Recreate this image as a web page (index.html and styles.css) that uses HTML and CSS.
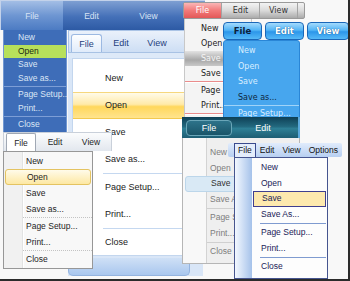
FILE: index.html
```html
<!DOCTYPE html>
<html lang="en">
<head>
    <meta charset="UTF-8">
    <meta name="viewport" content="width=device-width, initial-scale=1.0">
    <title>Menu Styles</title>
    <link rel="stylesheet" href="styles.css">
</head>
<body>
    <div class="desk">
        <!-- dark blue -->
        <div class="win win-a">
            <div class="a-bar">
                <span class="a-tab on">File</span>
                <span class="a-tab">Edit</span>
                <span class="a-tab">View</span>
            </div>
            <ul class="menu a-menu">
                <li>New</li>
                <li class="hi">Open</li>
                <li>Save</li>
                <li>Save as...</li>
                <li class="sep"></li>
                <li>Page Setup...</li>
                <li>Print...</li>
                <li class="sep"></li>
                <li>Close</li>
            </ul>
        </div>

        <!-- office 2007 -->
        <div class="win win-b">
            <div class="b-tabs">
                <span class="b-tab on">File</span>
                <span class="b-tab">Edit</span>
                <span class="b-tab view">View</span>
            </div>
            <div class="b-band"></div>
            <ul class="menu b-menu">
                <li>New</li>
                <li class="hi">Open</li>
                <li>Save</li>
                <li>Save as...</li>
                <li class="sep"></li>
                <li>Page Setup...</li>
                <li>Print...</li>
                <li class="sep"></li>
                <li>Close</li>
            </ul>
            <div class="b-foot"></div>
        </div>

        <!-- gray / red -->
        <div class="win win-c">
            <div class="c-bar">
                <span class="c-item on">File</span>
                <span class="c-item">Edit</span>
                <span class="c-item">View</span>
            </div>
            <ul class="menu c-menu">
                <li>New</li>
                <li>Open</li>
                <li class="hi">Save</li>
                <li>Save As...</li>
                <li class="sep"></li>
                <li>Page Setup...</li>
                <li>Print...</li>
                <li class="sep"></li>
            </ul>
        </div>

        <!-- aqua -->
        <div class="win win-d">
            <div class="d-btns">
                <span class="d-btn on">File</span>
                <span class="d-btn">Edit</span>
                <span class="d-btn view">View</span>
            </div>
            <ul class="menu d-menu">
                <li>New</li>
                <li>Open</li>
                <li>Save</li>
                <li class="dark">Save as...</li>
                <li class="sep"></li>
                <li>Page Setup...</li>
            </ul>
        </div>

        <!-- teal -->
        <div class="win win-e">
            <div class="e-hdr">
                <span class="e-btn">File</span>
                <span class="e-lbl">Edit</span>
            </div>
            <ul class="menu e-menu">
                <li>New</li>
                <li>Open</li>
                <li class="hi">Save</li>
                <li>Save As...</li>
                <li class="sep"></li>
                <li>Page Setup...</li>
                <li>Print...</li>
                <li class="sep"></li>
                <li>Close</li>
            </ul>
        </div>

        <!-- office xp -->
        <div class="win win-f">
            <div class="f-bar">
                <span class="f-grip"></span>
                <span class="f-item on">File</span>
                <span class="f-item">Edit</span>
                <span class="f-item">View</span>
                <span class="f-item">Options</span>
            </div>
            <ul class="menu f-menu">
                <li>New</li>
                <li>Open</li>
                <li class="hi">Save</li>
                <li>Save As...</li>
                <li class="sep"></li>
                <li>Page Setup...</li>
                <li>Print...</li>
                <li class="sep"></li>
                <li>Close</li>
            </ul>
        </div>

        <!-- windows 7 -->
        <div class="win win-g">
            <div class="g-bar">
                <span class="g-tab on">File</span>
                <span class="g-tab">Edit</span>
                <span class="g-tab view">View</span>
            </div>
            <ul class="menu g-menu">
                <li>New</li>
                <li class="hi">Open</li>
                <li>Save</li>
                <li>Save as...</li>
                <li class="sep"></li>
                <li>Page Setup...</li>
                <li>Print...</li>
                <li class="sep"></li>
                <li>Close</li>
            </ul>
        </div>
    </div>
</body>
</html>
```

FILE: styles.css
```css
* {
    box-sizing: border-box;
}

body {
    margin: 0;
    background: #f6f6f6;
}

.desk {
    position: relative;
    width: 350px;
    height: 281px;
    background: #f8f8f8;
    border-right: 2px solid #2b2b2b;
    border-bottom: 2px solid #2b2b2b;
    overflow: hidden;
    font-family: "Liberation Sans", Arial, sans-serif;
    font-size: 8.5px;
}

.win {
    position: absolute;
}

.menu {
    list-style: none;
    margin: 0;
    padding: 0;
}

.menu li {
    white-space: nowrap;
}

/* dark blue */
.win-a {
    left: 0;
    top: 0;
    width: 205px;
    z-index: 1;
}

.a-bar {
    display: flex;
    height: 30px;
    background: linear-gradient(#7e9fd2, #4470b8 55%, #2d5aa4);
    border-top: 1px solid #c3d2ea;
    border-left: 1px solid #c3d2ea;
}

.a-tab {
    width: 57px;
    display: flex;
    align-items: center;
    justify-content: center;
    color: #d8e3f4;
}

.a-tab.on {
    width: 62px;
    background: linear-gradient(#a3bee5, #6e96d2 50%, #4c7bc3);
}

.a-menu {
    width: 64px;
    margin-left: 3px;
    padding-top: 1px;
    background: #3e6db8;
    border: 1px solid #7197d1;
    border-top: 0;
    color: #dce6f5;
}

.a-menu li {
    height: 13.5px;
    line-height: 13.5px;
    padding-left: 14px;
}

.a-menu .hi {
    background: #b7e05b;
    color: #1c2a10;
}

.a-menu .sep {
    height: 1px;
    margin: 1px 0;
    background: #7d9ed6;
}

/* office 2007 */
.win-b {
    left: 68px;
    top: 30px;
    width: 135px;
    z-index: 2;
    display: flex;
    flex-direction: column;
    background: #d9e6f7;
}

.b-tabs {
    display: flex;
    align-items: flex-end;
    height: 22px;
    padding-left: 2px;
    background: linear-gradient(#eaf1fb, #cddef4);
    border: 1px solid #abc4e6;
    border-bottom: 0;
}

.b-tab {
    width: 38px;
    height: 18px;
    display: flex;
    align-items: center;
    justify-content: center;
    color: #1f3f7c;
    font-size: 9px;
}

.b-tab.on {
    width: 31px;
    background: linear-gradient(#fdfeff, #e0ebfa);
    border: 1px solid #9cb9e2;
    border-bottom: 0;
    border-radius: 3px 3px 0 0;
}

.b-tab.view {
    width: 34px;
}

.b-band {
    height: 6px;
    background: #dde9f8;
    border-top: 1px solid #a8c2e4;
}

.b-menu {
    margin-left: 4px;
    padding-top: 6px;
    height: 198px;
    background: #fff;
    border: 1px solid #c3d6ee;
    color: #222;
    font-size: 9px;
}

.b-menu li {
    height: 27px;
    line-height: 27px;
    padding-left: 32px;
}

.b-menu .hi {
    background: linear-gradient(#fffbe9, #ffeaa9 45%, #ffd75c 55%, #ffe48e);
    border-top: 1px solid #f6d77d;
    border-bottom: 1px solid #f3c94f;
    line-height: 25px;
}

.b-menu .sep {
    height: 1px;
    margin-left: 30px;
    background: #c5d8f0;
}

.b-foot {
    width: 122px;
    height: 18px;
    margin-top: 2px;
    background: linear-gradient(#cfe0f6, #a9c7ee);
    border: 1px solid #93b3df;
    border-top: 0;
    border-radius: 0 0 5px 5px;
}

/* gray / red */
.win-c {
    left: 183px;
    top: 2px;
    width: 122px;
    z-index: 3;
    font-family: "DejaVu Sans", Verdana, sans-serif;
    font-size: 8px;
}

.c-bar {
    display: flex;
    height: 17px;
    background: linear-gradient(#f3f3f3, #dadada 50%, #ababab);
    border: 1px solid #9a9a9a;
    border-radius: 2px;
    color: #333;
}

.c-item {
    width: 38px;
    display: flex;
    align-items: center;
    justify-content: center;
    border-right: 1px solid #a3a3a3;
}

.c-item.on {
    background: linear-gradient(#fab6b6, #f27a7a 50%, #e35858);
    color: #fff;
}

.c-menu {
    width: 68px;
    height: 114px;
    margin-left: 1px;
    padding-top: 2px;
    background: #f4f4f4;
    border: 1px solid #c8c8c8;
    border-top: 0;
    color: #222;
}

.c-menu li {
    height: 15px;
    line-height: 15px;
    padding-left: 16px;
}

.c-menu .hi {
    background: linear-gradient(#e2e2e2, #a8a8a8 60%, #c8c8c8);
    color: #f5f5f5;
}

.c-menu .sep {
    height: 2px;
    border-top: 1px solid #ea8c8c;
    border-bottom: 1px solid #fff;
}

/* aqua */
.win-d {
    left: 223px;
    top: 22px;
    width: 126px;
    z-index: 4;
    font-family: "DejaVu Sans", Verdana, sans-serif;
    font-size: 8px;
}

.d-btns {
    display: flex;
    gap: 3px;
}

.d-btn {
    width: 39px;
    height: 18px;
    display: flex;
    align-items: center;
    justify-content: center;
    background: linear-gradient(#a4dbfd, #52b4f5 45%, #2c96ea 55%, #55b9f7);
    border: 1px solid #1a67b8;
    border-radius: 4px;
    color: #fff;
    font-weight: bold;
    font-size: 8.5px;
    text-shadow: 0 0 1px #0b3d70;
}

.d-btn.on {
    color: #0d1f3a;
    text-shadow: none;
}

.d-btn.view {
    width: 42px;
}

.d-menu {
    width: 77px;
    height: 96px;
    padding-top: 2px;
    background: #47a6ee;
    border: 1px solid #2a86d6;
    border-radius: 3px 3px 0 0;
    color: #d9eeff;
}

.d-menu li {
    height: 15.5px;
    line-height: 15.5px;
    padding-left: 14px;
}

.d-menu .dark {
    color: #0f2740;
}

.d-menu .sep {
    height: 1px;
    background: #a0d3f8;
}

/* teal */
.win-e {
    left: 182px;
    top: 117px;
    width: 118px;
    z-index: 5;
}

.e-hdr {
    display: flex;
    align-items: center;
    height: 21px;
    padding-left: 4px;
    background: linear-gradient(#0e4056, #22687e 45%, #2e7f95 55%, #1d5d73);
    border-right: 2px solid #5aa8dc;
    color: #fff;
    font-size: 9px;
}

.e-btn {
    width: 46px;
    height: 16px;
    display: flex;
    align-items: center;
    justify-content: center;
    background: linear-gradient(#2d738a, #1a5569);
    border: 1px solid #6aa6b8;
    border-radius: 4px;
}

.e-lbl {
    width: 50px;
    margin-left: 6px;
    text-align: center;
}

.e-menu {
    padding: 7px 0 3px;
    background: linear-gradient(to right, #f8f8f8 23px, #d3d3d3 23px, #d3d3d3 24px, #efefef 24px);
    border: 1px solid #b6b6b6;
    border-top: 0;
    color: #7d7d7d;
}

.e-menu li {
    height: 15.5px;
    line-height: 15.5px;
    padding-left: 27px;
}

.e-menu .hi {
    margin: 0 2px;
    padding-left: 25px;
    line-height: 13.5px;
    background: #d9e9f5;
    border: 1px solid #bcd6ea;
    border-radius: 3px;
    color: #333;
}

.e-menu .sep {
    height: 1px;
    margin: 1px 0 1px 24px;
    background: #d0d0d0;
}

/* office xp */
.win-f {
    left: 228px;
    top: 143px;
    width: 114px;
    z-index: 6;
    color: #1b2358;
}

.f-bar {
    display: flex;
    align-items: center;
    height: 14px;
    background: linear-gradient(#e1ecfc, #b7cff1);
    border-radius: 2px;
    color: #111;
}

.f-grip {
    width: 3px;
    height: 10px;
    margin: 0 3px 0 2px;
    background-image: radial-gradient(circle, #3b5a99 0.8px, transparent 1px);
    background-size: 3px 3px;
}

.f-item {
    height: 14px;
    line-height: 14px;
    padding: 0 4px;
}

.f-item.on {
    padding: 0 3px;
    background: #e4edfb;
    border: 1px solid #3a4a8e;
    border-bottom: 0;
    line-height: 13px;
}

.f-menu {
    width: 94px;
    margin-left: 6px;
    padding: 2px 1px 3px;
    background: linear-gradient(to right, #f3f8ff 0, #a5c2ea 17px, #fdfdfd 17px);
    border: 1px solid #46558f;
}

.f-menu li {
    height: 15.5px;
    line-height: 15.5px;
    padding-left: 25px;
}

.f-menu .hi {
    margin-left: 17px;
    padding-left: 8px;
    line-height: 13.5px;
    background: #fde9ae;
    border: 1px solid #3f3f8f;
}

.f-menu .sep {
    height: 1px;
    margin: 1px 0 1px 24px;
    background: #7f9bd0;
}

/* windows 7 */
.win-g {
    left: 3px;
    top: 132px;
    width: 109px;
    z-index: 7;
    color: #1e1e1e;
}

.g-bar {
    display: flex;
    align-items: flex-end;
    height: 19px;
    padding-left: 2px;
    background: linear-gradient(#fbfcfd, #e2e7ee);
    border: 1px solid #c9d0da;
    border-bottom: 0;
}

.g-tab {
    width: 38px;
    height: 18px;
    display: flex;
    align-items: center;
    justify-content: center;
}

.g-tab.on {
    width: 30px;
    background: #fff;
    border: 1px solid #a0a8b4;
    border-bottom: 0;
    border-radius: 2px 2px 0 0;
}

.g-tab.view {
    width: 34px;
}

.g-menu {
    width: 90px;
    padding: 1px 0;
    background: linear-gradient(to right, #f1f1f1 18px, #e2e3e3 18px, #e2e3e3 19px, #fff 19px, #fff 20px, #f8f8f8 20px);
    border: 1px solid #979797;
}

.g-menu li {
    height: 16px;
    line-height: 16px;
    padding-left: 22px;
}

.g-menu .hi {
    margin: 0 1px;
    padding-left: 21px;
    line-height: 14px;
    background: linear-gradient(#fffbea, #fde8a3);
    border: 1px solid #e4c361;
    border-radius: 3px;
}

.g-menu .sep {
    height: 1px;
    margin-left: 19px;
    border-top: 1px dotted #c3c3c3;
}
```
